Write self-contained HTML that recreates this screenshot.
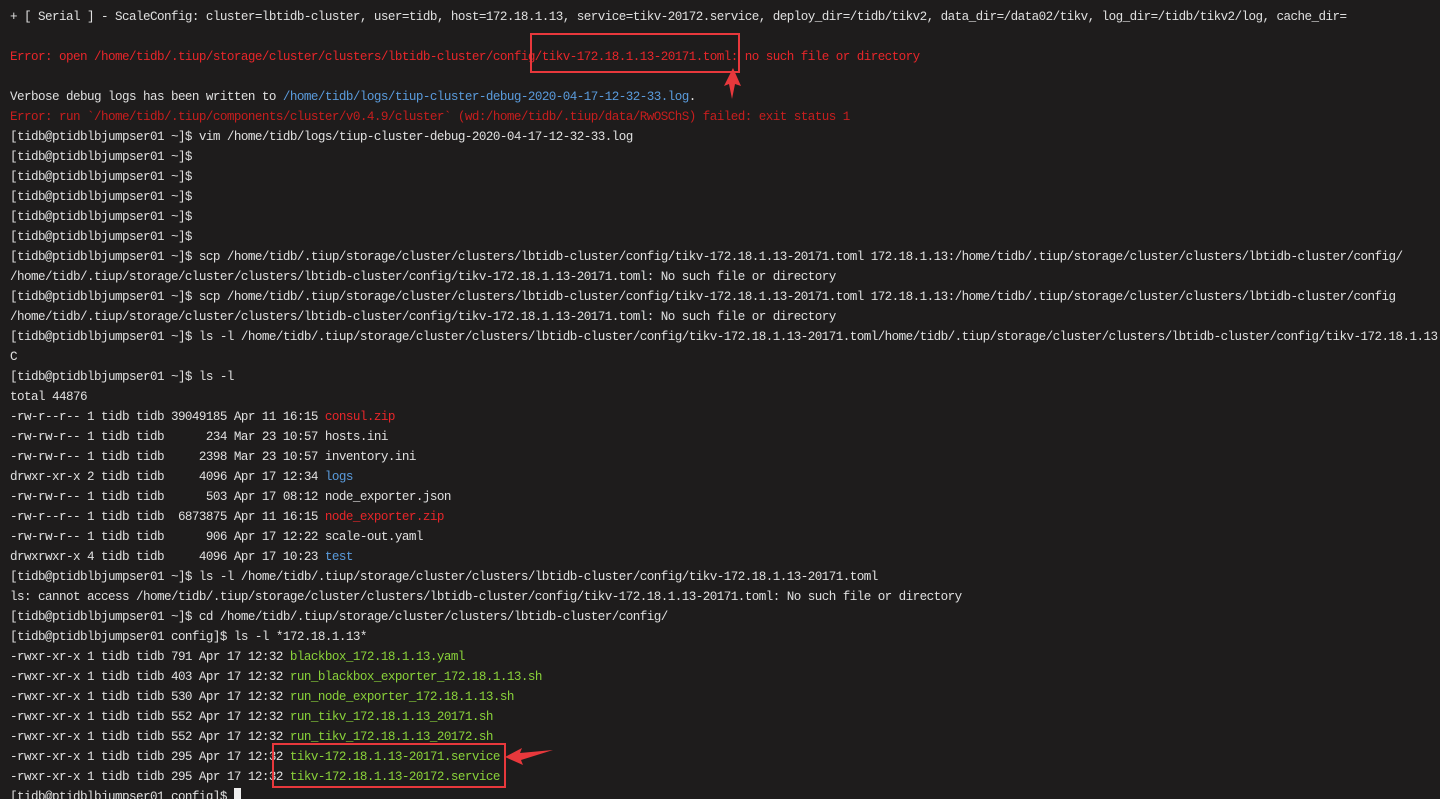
<!DOCTYPE html>
<html><head><meta charset="utf-8"><style>
html,body{margin:0;padding:0;background:#1e1c1c;width:1440px;height:799px;overflow:hidden}
pre{margin:0;padding:7px 0 0 10px;font-family:"Liberation Mono",monospace;font-size:12.6px;letter-spacing:-0.56px;line-height:20px;color:#e0e0e0;white-space:pre}
.r{color:#e8262a}.r2{color:#c81e1e}.b{color:#5a9bdc}.g{color:#8ad23a}
.box{position:absolute;border:2px solid #e8383c}
.cur{display:inline-block;width:7px;height:14px;background:#eee;vertical-align:-2px}
</style></head><body>
<pre>+ [ Serial ] - ScaleConfig: cluster=lbtidb-cluster, user=tidb, host=172.18.1.13, service=tikv-20172.service, deploy_dir=/tidb/tikv2, data_dir=/data02/tikv, log_dir=/tidb/tikv2/log, cache_dir=

<span class="r">Error: open /home/tidb/.tiup/storage/cluster/clusters/lbtidb-cluster/config/tikv-172.18.1.13-20171.toml: no such file or directory</span>

Verbose debug logs has been written to <span class="b">/home/tidb/logs/tiup-cluster-debug-2020-04-17-12-32-33.log</span>.
<span class="r2">Error: run `/home/tidb/.tiup/components/cluster/v0.4.9/cluster` (wd:/home/tidb/.tiup/data/RwOSChS) failed: exit status 1</span>
[tidb@ptidblbjumpser01 ~]$ vim /home/tidb/logs/tiup-cluster-debug-2020-04-17-12-32-33.log
[tidb@ptidblbjumpser01 ~]$
[tidb@ptidblbjumpser01 ~]$
[tidb@ptidblbjumpser01 ~]$
[tidb@ptidblbjumpser01 ~]$
[tidb@ptidblbjumpser01 ~]$
[tidb@ptidblbjumpser01 ~]$ scp /home/tidb/.tiup/storage/cluster/clusters/lbtidb-cluster/config/tikv-172.18.1.13-20171.toml 172.18.1.13:/home/tidb/.tiup/storage/cluster/clusters/lbtidb-cluster/config/
/home/tidb/.tiup/storage/cluster/clusters/lbtidb-cluster/config/tikv-172.18.1.13-20171.toml: No such file or directory
[tidb@ptidblbjumpser01 ~]$ scp /home/tidb/.tiup/storage/cluster/clusters/lbtidb-cluster/config/tikv-172.18.1.13-20171.toml 172.18.1.13:/home/tidb/.tiup/storage/cluster/clusters/lbtidb-cluster/config
/home/tidb/.tiup/storage/cluster/clusters/lbtidb-cluster/config/tikv-172.18.1.13-20171.toml: No such file or directory
[tidb@ptidblbjumpser01 ~]$ ls -l /home/tidb/.tiup/storage/cluster/clusters/lbtidb-cluster/config/tikv-172.18.1.13-20171.toml/home/tidb/.tiup/storage/cluster/clusters/lbtidb-cluster/config/tikv-172.18.1.13
C
[tidb@ptidblbjumpser01 ~]$ ls -l
total 44876
-rw-r--r-- 1 tidb tidb 39049185 Apr 11 16:15 <span class="r">consul.zip</span>
-rw-rw-r-- 1 tidb tidb      234 Mar 23 10:57 hosts.ini
-rw-rw-r-- 1 tidb tidb     2398 Mar 23 10:57 inventory.ini
drwxr-xr-x 2 tidb tidb     4096 Apr 17 12:34 <span class="b">logs</span>
-rw-rw-r-- 1 tidb tidb      503 Apr 17 08:12 node_exporter.json
-rw-r--r-- 1 tidb tidb  6873875 Apr 11 16:15 <span class="r">node_exporter.zip</span>
-rw-rw-r-- 1 tidb tidb      906 Apr 17 12:22 scale-out.yaml
drwxrwxr-x 4 tidb tidb     4096 Apr 17 10:23 <span class="b">test</span>
[tidb@ptidblbjumpser01 ~]$ ls -l /home/tidb/.tiup/storage/cluster/clusters/lbtidb-cluster/config/tikv-172.18.1.13-20171.toml
ls: cannot access /home/tidb/.tiup/storage/cluster/clusters/lbtidb-cluster/config/tikv-172.18.1.13-20171.toml: No such file or directory
[tidb@ptidblbjumpser01 ~]$ cd /home/tidb/.tiup/storage/cluster/clusters/lbtidb-cluster/config/
[tidb@ptidblbjumpser01 config]$ ls -l *172.18.1.13*
-rwxr-xr-x 1 tidb tidb 791 Apr 17 12:32 <span class="g">blackbox_172.18.1.13.yaml</span>
-rwxr-xr-x 1 tidb tidb 403 Apr 17 12:32 <span class="g">run_blackbox_exporter_172.18.1.13.sh</span>
-rwxr-xr-x 1 tidb tidb 530 Apr 17 12:32 <span class="g">run_node_exporter_172.18.1.13.sh</span>
-rwxr-xr-x 1 tidb tidb 552 Apr 17 12:32 <span class="g">run_tikv_172.18.1.13_20171.sh</span>
-rwxr-xr-x 1 tidb tidb 552 Apr 17 12:32 <span class="g">run_tikv_172.18.1.13_20172.sh</span>
-rwxr-xr-x 1 tidb tidb 295 Apr 17 12:32 <span class="g">tikv-172.18.1.13-20171.service</span>
-rwxr-xr-x 1 tidb tidb 295 Apr 17 12:32 <span class="g">tikv-172.18.1.13-20172.service</span>
[tidb@ptidblbjumpser01 config]$ <span class="cur"></span></pre>
<div class="box" style="left:530px;top:33px;width:206px;height:36px"></div>
<div class="box" style="left:272px;top:743px;width:230px;height:41px"></div>
<svg style="position:absolute;left:0;top:0" width="1440" height="799">
<polygon points="733,68 741,86 735,84 732,99 729,84 724,86" fill="#e8383c"/>
<polygon points="505,757 522,748 520,753 553,750 521,760 523,765" fill="#e8383c"/>
</svg>
</body></html>
